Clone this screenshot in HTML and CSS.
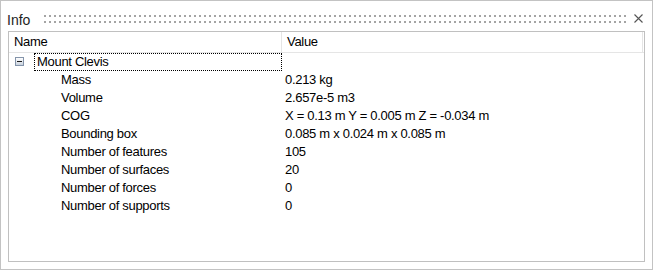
FILE: index.html
```html
<!DOCTYPE html>
<html>
<head>
<meta charset="utf-8">
<link rel="stylesheet" href="styles.css">
</head>
<body>
<div class="panel">
  <div class="titlebar">
    <span class="title">Info</span>
    <span class="grip"></span>
    <svg class="close" width="9" height="9" viewBox="0 0 9 9"><path d="M0.5 0.5 L8.5 8.5 M8.5 0.5 L0.5 8.5" stroke="#555" stroke-width="1.1" fill="none"/></svg>
  </div>
  <div class="tree">
    <div class="header">
      <div class="hcell hname">Name</div>
      <div class="hcell hvalue">Value</div>
    </div>
    <div class="row">
      <div class="ncell root">
        <span class="expander"><span class="minus"></span></span>
        <span class="focus">Mount Clevis</span>
      </div>
      <div class="vcell"></div>
    </div>
    <div class="row"><div class="ncell child">Mass</div><div class="vcell">0.213 kg</div></div>
    <div class="row"><div class="ncell child">Volume</div><div class="vcell">2.657e-5 m3</div></div>
    <div class="row"><div class="ncell child">COG</div><div class="vcell">X = 0.13 m Y = 0.005 m Z = -0.034 m</div></div>
    <div class="row"><div class="ncell child">Bounding box</div><div class="vcell">0.085 m x 0.024 m x 0.085 m</div></div>
    <div class="row"><div class="ncell child">Number of features</div><div class="vcell">105</div></div>
    <div class="row"><div class="ncell child">Number of surfaces</div><div class="vcell">20</div></div>
    <div class="row"><div class="ncell child">Number of forces</div><div class="vcell">0</div></div>
    <div class="row"><div class="ncell child">Number of supports</div><div class="vcell">0</div></div>
  </div>
</div>
</body>
</html>
```
FILE: styles.css
```css
html, body {
  margin: 0;
  padding: 0;
  background: #ffffff;
}
body {
  font-family: "Liberation Sans", Arial, sans-serif;
  color: #000;
}
.panel {
  box-sizing: border-box;
  width: 653px;
  height: 270px;
  border: 1px solid #c3c3c3;
  padding: 0 7px 7px 7px;
  display: flex;
  flex-direction: column;
  background: #fff;
}
.titlebar {
  height: 30px;
  flex: none;
  display: flex;
  align-items: flex-start;
}
.title {
  margin-top: 11px;
  margin-left: -1px;
  font-size: 14px;
  line-height: 16px;
  color: #1e1e1e;
}
.grip {
  flex: 1;
  height: 8px;
  margin-top: 14px;
  margin-left: 14px;
  margin-right: 8px;
  background-image:
    linear-gradient(90deg, #a4a4a4 2px, transparent 2px),
    linear-gradient(90deg, #a4a4a4 2px, transparent 2px);
  background-size: 5px 2px, 5px 2px;
  background-repeat: repeat-x, repeat-x;
  background-position: 0 0, 0 6px;
}
.close {
  margin-top: 13px;
  margin-right: 2px;
  display: block;
}
.tree {
  flex: 1;
  border: 1px solid #c0c0c0;
  background: #fff;
  font-size: 13px;
  letter-spacing: -0.3px;
}
.header {
  display: flex;
  height: 20px;
  border-bottom: 1px solid #e5e5e5;
}
.hcell {
  box-sizing: border-box;
  line-height: 20px;
  padding-left: 5px;
  border-right: 1px solid #e5e5e5;
  color: #000;
}
.hname {
  width: 273px;
}
.hvalue {
  width: 361px;
}
.row {
  display: grid;
  grid-template-columns: 273px 1fr;
  height: 18px;
  line-height: 18px;
}
.ncell {
  white-space: nowrap;
}
.child {
  padding-left: 52px;
}
.root {
  display: flex;
  align-items: flex-start;
}
.expander {
  box-sizing: border-box;
  width: 9px;
  height: 9px;
  margin-top: 4px;
  margin-left: 6px;
  border: 1px solid #8494aa;
  background: linear-gradient(#ffffff, #c9d2de);
  display: flex;
  align-items: center;
  justify-content: center;
}
.minus {
  width: 5px;
  height: 1px;
  background: #1a1a1a;
}
.focus {
  box-sizing: border-box;
  flex: 1;
  height: 18px;
  line-height: 16px;
  margin-left: 10px;
  padding-left: 2px;
  border: 1px dotted #000;
}
.vcell {
  padding-left: 3px;
  white-space: nowrap;
}
```
